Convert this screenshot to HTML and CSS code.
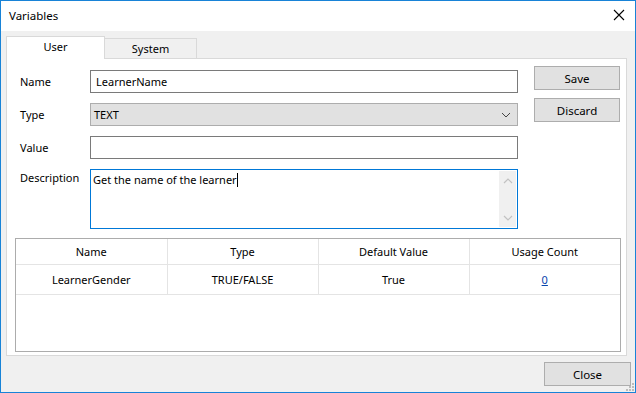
FILE: index.html
```html
<!DOCTYPE html>
<html lang="en">
<head>
    <meta charset="UTF-8">
    <title>Variables</title>
    <link rel="stylesheet" href="styles.css">
</head>
<body>

<div class="window">
    <div class="titlebar">
        <span class="title">Variables</span>
        <svg class="close-x" width="12" height="12" viewBox="0 0 12 12">
            <path d="M1 1 L11 11 M11 1 L1 11" stroke="#000" stroke-width="1.1" fill="none"/>
        </svg>
    </div>

    <div class="content">
        <div class="tabs">
            <div class="tab active">User</div>
            <div class="tab">System</div>
        </div>

        <div class="tab-page">
            <div class="top">
                <div class="form">
                    <div class="row">
                        <label>Name</label>
                        <div class="textbox">LearnerName</div>
                    </div>
                    <div class="row">
                        <label>Type</label>
                        <div class="combo">
                            <span>TEXT</span>
                            <svg width="10" height="6" viewBox="0 0 10 6">
                                <path d="M1 1 L5 5 L9 1" stroke="#444" stroke-width="1" fill="none"/>
                            </svg>
                        </div>
                    </div>
                    <div class="row">
                        <label>Value</label>
                        <div class="textbox"></div>
                    </div>
                    <div class="row row-desc">
                        <label>Description</label>
                        <div class="textarea">
                            <div class="textarea-text">Get the name of the learner<span class="caret"></span></div>
                            <div class="scrollbar">
                                <svg width="10" height="6" viewBox="0 0 10 6">
                                    <path d="M1 5 L5 1 L9 5" stroke="#c2c2c2" stroke-width="1.2" fill="none"/>
                                </svg>
                                <svg width="10" height="6" viewBox="0 0 10 6">
                                    <path d="M1 1 L5 5 L9 1" stroke="#c2c2c2" stroke-width="1.2" fill="none"/>
                                </svg>
                            </div>
                        </div>
                    </div>
                </div>
                <div class="side">
                    <button>Save</button>
                    <button>Discard</button>
                </div>
            </div>

            <div class="grid">
                <table>
                    <tr class="head">
                        <th>Name</th>
                        <th>Type</th>
                        <th>Default Value</th>
                        <th>Usage Count</th>
                    </tr>
                    <tr>
                        <td>LearnerGender</td>
                        <td>TRUE/FALSE</td>
                        <td>True</td>
                        <td><a href="#">0</a></td>
                    </tr>
                </table>
            </div>
        </div>
    </div>

    <div class="footer">
        <button class="close-btn">Close</button>
        <svg class="grip" width="8" height="8" viewBox="0 0 8 8">
            <rect x="6" y="0" width="2" height="2" fill="#bcbcbc"/>
            <rect x="3" y="3" width="2" height="2" fill="#bcbcbc"/>
            <rect x="6" y="3" width="2" height="2" fill="#bcbcbc"/>
            <rect x="0" y="6" width="2" height="2" fill="#bcbcbc"/>
            <rect x="3" y="6" width="2" height="2" fill="#bcbcbc"/>
            <rect x="6" y="6" width="2" height="2" fill="#bcbcbc"/>
        </svg>
    </div>
</div>

</body>
</html>
```

FILE: styles.css
```css
body {
    margin: 0;
    font-family: "Noto Sans", "Open Sans", sans-serif;
    font-size: 11px;
    color: #000;
    background: #fff;
}
.window {
    width: 636px;
    height: 393px;
    box-sizing: border-box;
    border: 1px solid #1883d7;
    background-color: #f0f0f0;
    display: flex;
    flex-direction: column;
}
.titlebar {
    height: 30px;
    background-color: #fff;
    display: flex;
    align-items: center;
    justify-content: space-between;
    padding: 0 10px 0 8px;
    flex-shrink: 0;
    font-size: 11.5px;
}
.title {
    margin-top: -1px;
}
.close-x {
    margin-top: -2px;
}
.content {
    padding: 5px 8px 0 5px;
}
.tabs {
    display: flex;
    align-items: flex-end;
    height: 22px;
}
.tab {
    height: 20px;
    box-sizing: border-box;
    width: 92px;
    border: 1px solid #d9d9d9;
    border-bottom: none;
    border-left: none;
    background-color: #f0f0f0;
    text-align: center;
    line-height: 20px;
}
.tab.active {
    height: 23px;
    width: 99px;
    background-color: #fff;
    border-left: 1px solid #d9d9d9;
    line-height: 20px;
    margin-bottom: -1px;
    position: relative;
    z-index: 1;
}
.tab-page {
    height: 298px;
    box-sizing: border-box;
    background-color: #fff;
    border: 1px solid #d9d9d9;
    padding: 7px 0 0 0;
}
.top {
    display: flex;
    align-items: flex-start;
}
.form {
    padding: 4px 0 0 13px;
    width: 511px;
    box-sizing: border-box;
    flex-shrink: 0;
}
.row {
    display: flex;
    align-items: center;
    margin-bottom: 10px;
}
.row label {
    width: 70px;
    flex-shrink: 0;
}
.textbox {
    width: 428px;
    height: 23px;
    box-sizing: border-box;
    border: 1px solid #7a7a7a;
    padding: 0 5px;
    line-height: 21px;
}
.combo {
    width: 428px;
    height: 23px;
    box-sizing: border-box;
    border: 1px solid #adadad;
    background-color: #e1e1e1;
    padding: 0 6px 0 3px;
    display: flex;
    align-items: center;
    justify-content: space-between;
}
.row-desc {
    align-items: flex-start;
    margin-bottom: 9px;
}
.row-desc label {
    padding-top: 1px;
}
.textarea {
    width: 428px;
    height: 60px;
    box-sizing: border-box;
    border: 1px solid #0078d7;
    display: flex;
    justify-content: space-between;
}
.textarea-text {
    padding: 2px 0 0 2px;
}
.caret {
    display: inline-block;
    width: 1px;
    height: 14px;
    background-color: #000;
    vertical-align: -3px;
}
.scrollbar {
    width: 17px;
    background-color: #f0f0f0;
    margin: 1px;
    display: flex;
    flex-direction: column;
    justify-content: space-between;
    align-items: center;
    padding: 7px 0 6px;
    box-sizing: border-box;
}
.side {
    display: flex;
    flex-direction: column;
    gap: 8px;
    margin-left: 16px;
}
button {
    font-family: inherit;
    font-size: 11.5px;
    color: #000;
    width: 86px;
    height: 24px;
    background-color: #e1e1e1;
    border: 1px solid #adadad;
    padding: 0;
    margin: 0;
}
.grid {
    margin-left: 8px;
    width: 606px;
    height: 114px;
    box-sizing: border-box;
    border: 1px solid #acacac;
}
.grid table {
    width: 100%;
    border-collapse: collapse;
    table-layout: fixed;
}
.grid th, .grid td {
    font-weight: normal;
    text-align: center;
    border-right: 1px solid #e4e4e4;
    border-bottom: 1px solid #e4e4e4;
    padding: 0;
}
.grid th:last-child, .grid td:last-child {
    border-right: none;
}
.grid .head th {
    height: 25px;
}
.grid td {
    height: 29px;
}
.grid a {
    color: #0645ad;
    text-decoration: underline;
}
.footer {
    flex: 1;
    display: flex;
    justify-content: flex-end;
    align-items: flex-start;
    padding: 6px 0 0 0;
    position: relative;
}
.close-btn {
    width: 87px;
    height: 24px;
    margin-right: 4px;
}
.grip {
    position: absolute;
    right: 1px;
    bottom: 1px;
}
```
